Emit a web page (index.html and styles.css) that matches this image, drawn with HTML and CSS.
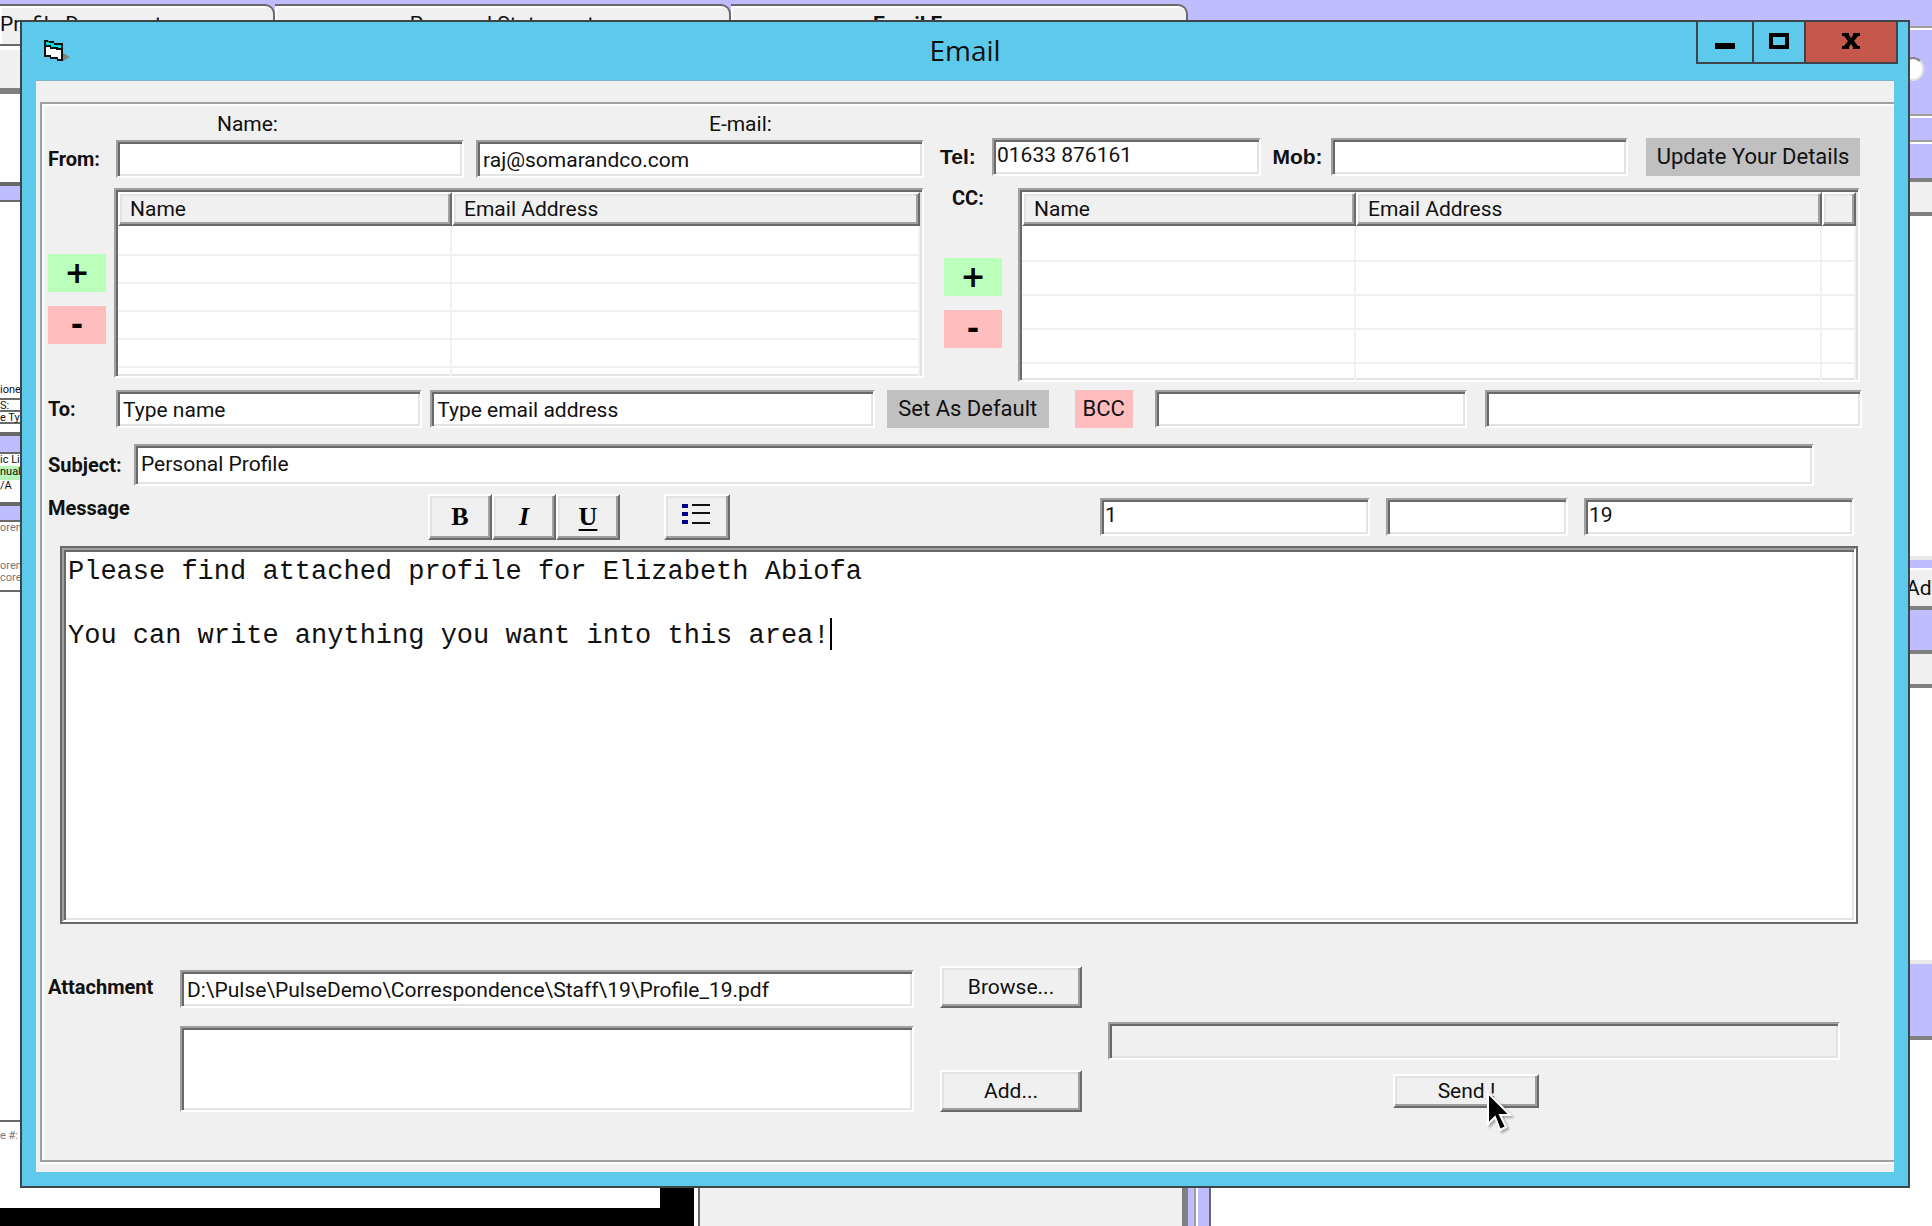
FILE: index.html
```
<!DOCTYPE html>
<html lang="en">
<head>
  <meta charset="UTF-8">
  <meta name="viewport" content="width=device-width, initial-scale=1.0">
  <title>Email</title>
  <link rel="stylesheet" href="styles.css">
</head>
<body>
  <!-- Main application, mostly covered by the email window -->
  <div class="desktop">
    <div class="app">
      <div class="tabs">
        <div class="tab tab-documents">Profile Document</div>
        <div class="tab tab-statement">Personal Statement</div>
        <div class="tab tab-email">Email Forms</div>
      </div>
      <div class="side-left">
        <div class="grey"></div>
        <div class="line"></div>
        <div class="lilac ruled"></div>
        <div></div>
        <div class="line">ione</div>
        <div class="line">S:</div>
        <div class="line">e Typ</div>
        <div class="line"></div>
        <div class="lilac ruled"></div>
        <div>ic Li</div>
        <div class="green">nual</div>
        <div>/A</div>
        <div class="line"></div>
        <div class="lilac ruled"></div>
        <div class="faint">oren</div>
        <div class="faint">oren</div>
        <div class="faint">coren</div>
        <div class="line"></div>
        <div class="line"></div>
        <div class="faint page-no">e #:</div>
      </div>
      <div class="app-bottom">
        <div class="preview"></div>
        <div class="pane"></div>
        <div class="splitter"></div>
        <div class="splitter splitter-last"></div>
      </div>
    </div>
    <div class="side-right">
      <div class="lilac"></div>
      <div class="lilac groove"><span class="round"></span></div>
      <div class="lilac groove"></div>
      <div class="lilac groove"></div>
      <div class="grey sunken"></div>
      <div></div>
      <div class="lilac soft"></div>
      <div class="grey add">Add</div>
      <div class="lilac"></div>
      <div class="grey sunken"></div>
      <div></div>
      <div class="lilac soft"></div>
      <div class="under"></div>
    </div>
  </div>

  <div class="window">
    <div class="title-bar">
      <svg class="title-icon" width="28" height="24" viewBox="0 0 28 24">
        <path d="M20 14l7 4-7 4z" fill="#808080"/>
        <path d="M1 1h4v1h6v2h9v18h-6v-2H7v-2H1z" fill="#111"/>
        <path d="M3 3h3v2h5v2h7v13h-3v-2H8v-2H3z" fill="#fff"/>
        <path d="M3 3h3v1h5v2h7v3h-3V8H8V6H3z" fill="#00e0e0"/>
        <path d="M3 6h5v2h7v1h3v2h-5v-1H7V8H3z" fill="#111"/>
      </svg>
      <h1>Email</h1>
      <div class="window-buttons">
        <button type="button" class="win-min" aria-label="Minimize">
          <svg width="20" height="16" viewBox="0 0 20 16"><path d="M0 10h20v6H0z"/></svg>
        </button>
        <button type="button" class="win-max" aria-label="Maximize">
          <svg width="20" height="16" viewBox="0 0 20 16"><path d="M0 0h20v16H0zM4 4v8h12V4z" fill-rule="evenodd"/></svg>
        </button>
        <button type="button" class="win-close" aria-label="Close">
          <svg width="18" height="16" viewBox="0 0 18 16"><path d="M0 0h7v2l2 3 2-3V0h7v3h-2l-4 5 4 5h2v3h-7v-2l-2-3-2 3v2H0v-3h2l4-5-4-5H0z"/></svg>
        </button>
      </div>
    </div>

    <div class="client">
      <form class="frame">
        <div class="recipients">
          <div class="to-side">
            <div class="from-grid">
              <label class="head-name" for="from-name">Name:</label>
              <label class="head-email" for="from-email">E-mail:</label>
              <span class="label">From:</span>
              <input type="text" id="from-name">
              <input type="text" id="from-email" value="raj@somarandco.com">
            </div>
            <div class="list-row">
              <div class="list-buttons">
                <button type="button" class="add-btn" aria-label="Add recipient">+</button>
                <button type="button" class="remove-btn" aria-label="Remove recipient">-</button>
              </div>
              <div class="list-view">
                <table>
                  <thead><tr><th class="col-name">Name</th><th>Email Address</th></tr></thead>
                  <tbody>
                    <tr><td></td><td></td></tr>
                    <tr><td></td><td></td></tr>
                    <tr><td></td><td></td></tr>
                    <tr><td></td><td></td></tr>
                    <tr><td></td><td></td></tr>
                    <tr><td></td><td></td></tr>
                  </tbody>
                </table>
              </div>
            </div>
          </div>

          <div class="cc-side">
            <div class="phone-row">
              <label class="label phone-label" for="tel">Tel:</label>
              <input type="text" id="tel" class="top-text" value="01633 876161">
              <label class="label phone-label mob-label" for="mob">Mob:</label>
              <input type="text" id="mob">
              <button type="button" class="flat-btn update-btn">Update Your Details</button>
            </div>
            <div class="list-row">
              <div class="list-buttons">
                <span class="label">CC:</span>
                <button type="button" class="add-btn" aria-label="Add CC">+</button>
                <button type="button" class="remove-btn" aria-label="Remove CC">-</button>
              </div>
              <div class="list-view cc-list">
                <table>
                  <thead><tr><th class="col-name">Name</th><th>Email Address</th><th class="col-last"></th></tr></thead>
                  <tbody>
                    <tr><td></td><td></td><td></td></tr>
                    <tr><td></td><td></td><td></td></tr>
                    <tr><td></td><td></td><td></td></tr>
                    <tr><td></td><td></td><td></td></tr>
                    <tr><td></td><td></td><td></td></tr>
                  </tbody>
                </table>
              </div>
            </div>
          </div>
        </div>

        <div class="to-row">
          <label class="label" for="to-name">To:</label>
          <input type="text" id="to-name" value="Type name">
          <input type="text" id="to-email" aria-label="To email address" value="Type email address">
          <button type="button" class="flat-btn default-btn">Set As Default</button>
          <button type="button" class="flat-btn bcc-btn">BCC</button>
          <input type="text" id="bcc-name" aria-label="BCC name">
          <input type="text" id="bcc-email" aria-label="BCC email address">
        </div>

        <div class="subject-row">
          <label class="label" for="subject">Subject:</label>
          <input type="text" id="subject" value="Personal Profile">
        </div>

        <div class="format-row">
          <label class="label" for="message">Message</label>
          <div class="toolbar">
            <button type="button" class="raised">B</button>
            <button type="button" class="raised italic">I</button>
            <button type="button" class="raised underline">U</button>
          </div>
          <button type="button" class="raised list-btn" aria-label="Bullet list">
            <svg width="30" height="24" viewBox="0 0 30 24">
              <path d="M0 2h6v4H0zM0 10h6v4H0zM0 18h6v4H0z" fill="#000090"/>
              <path d="M10 2h18v2H10zM10 10h18v2H10zM10 20h18v2H10z" fill="#111"/>
            </svg>
          </button>
          <div class="ids">
            <input type="text" class="top-text" aria-label="Type ID" value="1">
            <input type="text" class="short" aria-label="Group ID">
            <input type="text" class="top-text" aria-label="Staff ID" value="19">
          </div>
        </div>

        <div class="message-box">
          <textarea id="message" spellcheck="false">Please find attached profile for Elizabeth Abiofa

You can write anything you want into this area!</textarea>
          <span class="caret"></span>
        </div>

        <div class="attach-row">
          <label class="label" for="attachment">Attachment</label>
          <div class="attach-fields">
            <input type="text" id="attachment" value="D:\Pulse\PulseDemo\Correspondence\Staff\19\Profile_19.pdf">
            <select size="3" aria-label="Attached files"></select>
          </div>
          <div class="attach-buttons">
            <button type="button" class="raised">Browse...</button>
            <button type="button" class="raised">Add...</button>
          </div>
          <div class="send-area">
            <input type="text" class="status" aria-label="Status" readonly>
            <button type="button" class="raised send-btn">Send !
              <svg class="pointer" width="26" height="42" viewBox="0 0 26 42">
                <path d="M2 2v31l7-7 5 13 6-3-6-12h10z" fill="#000" stroke="#fff" stroke-width="2"/>
              </svg>
            </button>
          </div>
        </div>
      </form>
    </div>
  </div>
</body>
</html>
```

FILE: styles.css
```
* {
  box-sizing: border-box;
}

body {
  margin: 0;
  background: #fff;
  color: #111;
  font-family: "Roboto", sans-serif;
  font-size: 21px;
  line-height: 28px;
}

/* Application behind the window */
.desktop {
  display: flex;
  height: 100vh;
  overflow: hidden;
}

.app {
  flex: 1;
  display: flex;
  flex-direction: column;
}

.lilac { background: #bfbdff; }
.grey { background: #f0f0f0; }
.green { background: #b8f5b8; }

.tabs {
  display: flex;
  height: 46px;
  padding-top: 4px;
  background: #bfbdff;
}

.tab {
  height: 42px;
  padding-top: 4px;
  border: 2px solid #696969;
  border-left: 0;
  border-radius: 0 10px 0 0;
  background: #f0f0f0;
  box-shadow: inset 2px 2px #fff;
  text-align: center;
  white-space: nowrap;
  overflow: hidden;
}

.tab-documents {
  width: 275px;
  padding-right: 144px;
  text-align: right;
}

.tab-statement { width: 456px; }

.tab-email {
  width: 457px;
  padding-left: 142px;
  font-weight: bold;
  text-align: left;
}

.side-left {
  flex: 1;
  display: grid;
  grid-template-rows: 48px 90px 18px 182px 16px 12px 12px 10px 20px 12px 14px 12px 12px 18px 38px 12px 10px 10px 530px 26px;
  align-content: start;
  width: 20px;
  overflow: hidden;
  font-size: 11px;
  line-height: 12px;
  white-space: nowrap;
}

.side-left .grey {
  border-top: 4px solid #fff;
  border-bottom: 6px solid #808080;
}

.line { border-bottom: 2px solid #696969; }

.ruled {
  border-top: 2px solid #696969;
  border-bottom: 2px solid #696969;
}

.faint { color: #777; }
.page-no { padding-top: 8px; }

.app-bottom {
  display: flex;
  height: 38px;
}

.preview {
  width: 694px;
  border-right: 34px solid #000;
  border-bottom: 18px solid #000;
}

.pane {
  width: 490px;
  margin-left: 4px;
  border-left: 2px solid #696969;
  border-right: 6px solid #808080;
  background: #f0f0f0;
}

.splitter {
  width: 8px;
  border-right: 2px solid #a0a0a0;
  background: #bfbdff;
}

.splitter-last {
  width: 15px;
  border-left: 2px solid #fff;
  border-right: 2px solid #696969;
}

.side-right {
  display: grid;
  grid-template-rows: 26px 88px 26px 38px 38px 340px 12px 42px 40px 38px 272px 76px 1fr;
  width: 26px;
  overflow: hidden;
}

.groove {
  border-top: 2px solid #a0a0a0;
  box-shadow: inset 0 2px #fff;
}

.round {
  display: block;
  width: 22px;
  height: 24px;
  margin: 29px 0 0 -4px;
  border: 2px solid #808080;
  border-bottom-color: #e3e3e3;
  border-right-color: #e3e3e3;
  border-radius: 50%;
  background: #fff;
}

.sunken {
  border-top: 4px solid #808080;
  border-bottom: 4px solid #808080;
}

.soft { border-top: 4px solid #e9e9e9; }

.add {
  padding-top: 4px;
  border-top: 2px solid #fff;
  border-bottom: 4px solid #808080;
}

.under { border-top: 4px solid #808080; }

/* Email window */
.window {
  position: absolute;
  top: 20px;
  right: 22px;
  bottom: 38px;
  left: 20px;
  display: flex;
  flex-direction: column;
  border: 2px solid #3c464a;
  background: #5dcaec;
}

.title-bar {
  position: relative;
  display: flex;
  align-items: flex-start;
  justify-content: center;
  height: 58px;
}

.title-bar h1 {
  margin: 0;
  padding-top: 11px;
  font-family: "Open Sans", sans-serif;
  font-size: 28px;
  font-weight: normal;
  line-height: 34px;
}

.title-icon {
  position: absolute;
  top: 17px;
  left: 21px;
}

.window-buttons {
  position: absolute;
  top: -2px;
  right: 10px;
  display: flex;
}

.window-buttons button {
  width: 58px;
  height: 44px;
  padding: 0;
  border: 2px solid #3c464a;
  background: #5dcaec;
}

.window-buttons .win-max {
  width: 54px;
  margin-left: -2px;
}

.window-buttons .win-close {
  width: 94px;
  margin-left: -2px;
  background: #c5584b;
}

.client {
  flex: 1;
  display: flex;
  margin: 0 14px 14px;
  padding: 21px 0 10px 4px;
  border-top: 1px solid #7fb0c4;
  background: #f0f0f0;
}

.frame {
  flex: 1;
  display: flex;
  flex-direction: column;
  padding: 0 32px 48px 6px;
  border: 2px solid #a0a0a0;
  border-right: 0;
  box-shadow: inset 2px 2px #fff, 0 2px #fff;
}

.label {
  font-size: 20px;
  font-weight: bold;
}

/* Form controls */
input,
select,
button {
  color: #111;
  font-family: inherit;
  font-size: 21px;
  line-height: 28px;
  white-space: nowrap;
}

input,
select {
  min-width: 0;
  height: 38px;
  padding: 2px 5px 0;
  border: 2px solid #a0a0a0;
  border-right-color: #fff;
  border-bottom-color: #fff;
  border-radius: 0;
  background: #fff;
  box-shadow: inset 2px 2px #696969, inset -2px -2px #e3e3e3;
  outline: none;
}

input.top-text {
  padding: 0 3px 4px;
}

button {
  height: 38px;
  padding: 0;
  border: 0;
  border-radius: 0;
}

.flat-btn {
  background: #c0c0c0;
  font-size: 22px;
}

.raised {
  border: 2px solid #fff;
  border-right-color: #696969;
  border-bottom-color: #696969;
  background: #f0f0f0;
  box-shadow: inset -2px -2px #a0a0a0, inset 2px 2px #e3e3e3;
}

/* Sender and recipients */
.recipients {
  display: grid;
  grid-template-columns: minmax(0, 876fr) minmax(0, 922fr);
  gap: 16px;
}

.from-grid {
  display: grid;
  grid-template-columns: 56px minmax(0, 348fr) minmax(0, 448fr);
  grid-template-rows: 24px 38px;
  gap: 4px 12px;
  align-items: center;
  padding-top: 8px;
}

.head-name {
  grid-column: 2;
  padding-left: 29%;
}

.head-email { padding-left: 52%; }

.list-row {
  display: flex;
  gap: 8px;
  margin-top: 10px;
}

.list-buttons {
  display: flex;
  flex-direction: column;
  gap: 14px;
  width: 58px;
  padding-top: 66px;
}

.add-btn,
.remove-btn {
  background: #baffba;
  color: #000;
  font-family: "DejaVu Sans", sans-serif;
  font-size: 30px;
  font-weight: bold;
}

.remove-btn,
.bcc-btn {
  background: #ffbdbd;
}

.list-view {
  flex: 1;
  height: 190px;
  padding: 2px;
  border: 2px solid #a0a0a0;
  border-right-color: #fff;
  border-bottom-color: #fff;
  background: #fff;
  box-shadow: inset 2px 2px #696969, inset -2px -2px #e3e3e3;
  overflow: hidden;
}

.list-view table {
  width: 100%;
  border-spacing: 0;
  table-layout: fixed;
}

.list-view th {
  height: 34px;
  padding: 0 10px;
  border: 2px solid #fff;
  border-right-color: #696969;
  border-bottom-color: #696969;
  background: #f0f0f0;
  box-shadow: inset -2px -2px #a0a0a0, inset 2px 2px #e3e3e3;
  font-weight: normal;
  line-height: 28px;
  text-align: left;
}

.list-view td {
  height: 28px;
  padding: 0;
  border-right: 2px solid #f0f0f0;
  border-bottom: 2px solid #f0f0f0;
}

.list-view tr:first-child td { height: 30px; }
.list-view .col-name { width: 334px; }
.list-view .col-last { width: 34px; }

.cc-side {
  padding: 34px 2px 0 0;
}

.phone-row {
  display: flex;
  align-items: center;
}

.phone-label {
  width: 52px;
  font-family: "Liberation Sans", sans-serif;
  font-size: 21px;
}

.mob-label {
  width: 70px;
  padding-left: 11px;
}

#tel { flex: 270 1 0; }
#mob { flex: 294 1 0; }

.update-btn {
  width: 214px;
  margin-left: 18px;
}

.cc-side .list-row {
  gap: 16px;
  margin-top: 12px;
  padding-left: 4px;
}

.cc-side .list-buttons { padding-top: 0; }

.cc-side .list-buttons .label {
  margin-bottom: 36px;
  padding-left: 8px;
  line-height: 20px;
}

.cc-side .cc-list { height: 194px; }
.cc-list td { height: 34px; }
.cc-list tr:first-child td { height: 36px; }

.to-row {
  display: flex;
  align-items: center;
  margin-top: 8px;
}

.to-row .label { width: 68px; }
#to-name { flex: 304 1 0; margin-right: 8px; }
#to-email { flex: 448 1 0; }
#bcc-name { flex: 310 1 0; margin-right: 18px; }
#bcc-email { flex: 378 1 0; }

.default-btn {
  width: 162px;
  margin: 0 26px 0 12px;
}

.bcc-btn {
  width: 58px;
  margin-right: 22px;
}

.subject-row {
  display: flex;
  align-items: center;
  margin: 16px 48px 0 0;
}

.subject-row .label { width: 86px; }

#subject {
  flex: 1;
  height: 42px;
  padding-bottom: 4px;
}

/* Formatting bar */
.format-row {
  display: flex;
  margin-top: 8px;
}

.format-row .label { width: 380px; }

.toolbar {
  display: flex;
  margin-right: 44px;
}

.toolbar button {
  width: 64px;
  height: 46px;
  color: #000;
  font-family: "Liberation Serif", serif;
  font-size: 26px;
  font-weight: bold;
}

.toolbar .italic { font-style: italic; }

.toolbar .underline {
  text-decoration: underline;
  text-underline-offset: 4px;
}

.list-btn {
  width: 66px;
  height: 46px;
}

.ids {
  display: flex;
  gap: 16px;
  margin: 4px 8px 0 auto;
}

.ids input { width: 270px; }
.ids .short { width: 182px; }

.message-box {
  position: relative;
  flex: 1;
  display: flex;
  margin: 6px 4px 0 12px;
  border: 2px solid #696969;
}

.message-box textarea {
  flex: 1;
  padding: 6px 4px;
  border: 2px solid #a0a0a0;
  border-right-color: #fff;
  border-bottom-color: #fff;
  box-shadow: inset 2px 2px #696969, inset -2px -2px #e3e3e3;
  color: #111;
  font-family: "Liberation Mono", monospace;
  font-size: 27px;
  line-height: 32px;
  resize: none;
  outline: none;
}

.caret {
  position: absolute;
  top: 70px;
  left: 768px;
  width: 2px;
  height: 32px;
  background: #000;
}

/* Attachments and sending */
.attach-row {
  display: flex;
  margin-top: 42px;
}

.attach-row .label {
  width: 132px;
  padding-top: 7px;
}

.attach-fields {
  flex: 734 1 0;
  display: flex;
  flex-direction: column;
  gap: 18px;
  padding-top: 4px;
}

.attach-fields select { height: 86px; }

.attach-buttons {
  display: flex;
  flex-direction: column;
  justify-content: space-between;
  width: 142px;
  margin: 0 26px;
}

.attach-buttons button { height: 42px; }

.send-area {
  flex: 732 1 0;
  display: flex;
  flex-direction: column;
  gap: 14px;
  padding-top: 56px;
  margin-right: 22px;
}

.send-area .status { background: #f0f0f0; }

.send-area .send-btn {
  position: relative;
  width: 146px;
  height: 34px;
  margin-left: 39%;
}

.pointer {
  position: absolute;
  top: 15px;
  left: 91px;
  filter: drop-shadow(2px 2px 1px rgba(0, 0, 0, 0.3));
}
```
